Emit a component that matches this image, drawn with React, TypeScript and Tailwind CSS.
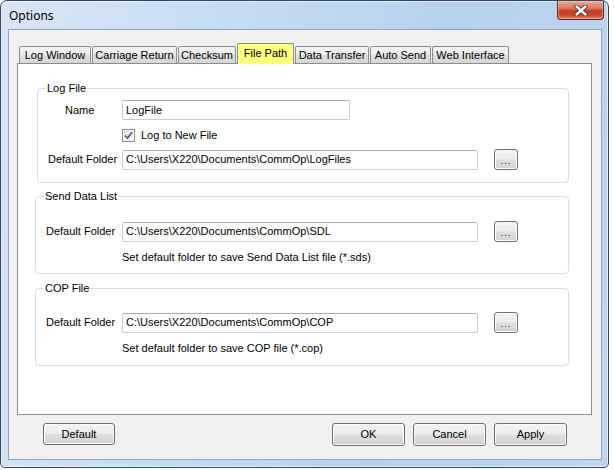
import React from 'react';

const btn =
  'flex items-center justify-center rounded-[3px] border border-[#707070] bg-[linear-gradient(180deg,#f4f4f4_0%,#ececec_48%,#dedede_52%,#d2d2d2_100%)] shadow-[inset_0_0_0_1px_#fbfbfb] text-[11px] leading-[13px] text-black';

const field =
  'flex items-center rounded-[2px] border border-[#c8ccd3] border-t-[#abadb3] bg-white pl-[3px] text-[11px] leading-[13px] text-black whitespace-nowrap overflow-hidden';

const tabs = [
  { label: 'Log Window', w: 'w-[72px]' },
  { label: 'Carriage Return', w: 'w-[85px]' },
  { label: 'Checksum', w: 'w-[58px]' },
  { label: 'File Path', w: 'w-[57px]', active: true },
  { label: 'Data Transfer', w: 'w-[74px]' },
  { label: 'Auto Send', w: 'w-[61px]' },
  { label: 'Web Interface', w: 'w-[77px]' },
];

function Browse() {
  return (
    <button className={`${btn} ml-[16px] h-[21px] w-[24px] items-end pb-[3px]`}>
      <span className="text-[9px] leading-[9px] tracking-[1px]">...</span>
    </button>
  );
}

function FolderRow({ labelPad, path }: { labelPad: string; path: string }) {
  return (
    <div className="flex h-[21px] items-center">
      <div className={`w-[86px] ${labelPad}`}>Default Folder</div>
      <div className={`${field} h-[20px] w-[356px]`}>{path}</div>
      <Browse />
    </div>
  );
}

function Group({ title, className, children }: { title: string; className: string; children: React.ReactNode }) {
  return (
    <div className={`relative rounded-[4px] border border-[#d5dfe5] ${className}`}>
      <span className="absolute left-[8px] top-[-7px] bg-white px-[1px] leading-[13px]">{title}</span>
      {children}
    </div>
  );
}

function CloseButton() {
  return (
    <div className="mr-[4px] flex h-[19px] w-[47px] items-center justify-center rounded-b-[4px] border border-t-0 border-[#5b2a20] bg-[linear-gradient(180deg,#e9aa9c_0%,#d9765f_40%,#c43b22_55%,#c84a2d_80%,#e0896a_100%)] shadow-[inset_0_0_0_1px_rgba(255,220,210,0.45)]">
      <svg width="14" height="11" viewBox="0 0 14 11">
        <path d="M2.5 1.5 L11.5 9.5 M11.5 1.5 L2.5 9.5" stroke="#4a2a24" strokeWidth="4.2" strokeLinecap="round" />
        <path d="M2.5 1.5 L11.5 9.5 M11.5 1.5 L2.5 9.5" stroke="#ffffff" strokeWidth="2.4" strokeLinecap="round" />
      </svg>
    </div>
  );
}

export default function App() {
  return (
    <div className="h-[470px] w-[614px] bg-white font-['Liberation_Sans',Arial,sans-serif] text-[11px] leading-[13px] text-black">
      <div className="flex h-[468px] w-[609px] flex-col rounded-t-[7px] rounded-b-[5px] border border-[#34475e] bg-[linear-gradient(100deg,#d7e6f7_0%,#c6dbf2_35%,#b7d0ec_65%,#bed5ef_100%)] shadow-[inset_0_0_0_1px_rgba(255,255,255,0.55)]">
        {/* title bar */}
        <div className="flex h-[28px] items-start justify-between">
          <span className="ml-[8px] mt-[7px] font-['Noto_Sans',sans-serif] text-[12px] leading-[16px] text-black">Options</span>
          <CloseButton />
        </div>

        {/* client area */}
        <div className="mx-[7px] flex h-[431px] w-[594px] flex-col border border-[#8fa6c0] bg-[#f0f0f0] pt-[13px]">
          <div className="relative z-10 ml-[10px] flex h-[20px] items-end gap-px">
            {tabs.map((t) =>
              t.active ? (
                <div
                  key={t.label}
                  className={`${t.w} -mb-px flex h-[21px] items-start justify-center rounded-t-[2px] border border-b-0 border-[#898c95] bg-[#ffff80] pt-[3px]`}
                >
                  {t.label}
                </div>
              ) : (
                <div
                  key={t.label}
                  className={`${t.w} flex h-[17px] items-center justify-center rounded-t-[2px] border border-b-0 border-[#898c95] bg-[linear-gradient(180deg,#f3f3f3_0%,#ebebeb_50%,#dedede_52%,#d6d6d6_100%)]`}
                >
                  {t.label}
                </div>
              )
            )}
          </div>

          {/* tab page */}
          <div className="ml-[8px] flex h-[352px] w-[575px] flex-col border border-[#898c95] bg-white">
            <Group title="Log File" className="ml-[19px] mt-[24px] h-[95px] w-[532px]">
              <div className="flex flex-col pt-[11px]">
                <div className="flex h-[20px] items-center">
                  <div className="w-[84px] pl-[27px]">Name</div>
                  <div className={`${field} h-[20px] w-[228px]`}>LogFile</div>
                </div>
                <div className="mt-[9px] flex h-[13px] items-center pl-[84px]">
                  <span className="flex h-[13px] w-[13px] items-center justify-center border border-[#8e8f8f] bg-[linear-gradient(135deg,#dcdcdc_0%,#ffffff_100%)] shadow-[inset_0_0_0_1px_#f4f4f4]">
                    <svg width="9" height="9" viewBox="0 0 9 9">
                      <path d="M1 4.5 L3.5 7.2 L8 1.3" fill="none" stroke="#4c5f8a" strokeWidth="1.8" />
                    </svg>
                  </span>
                  <span className="ml-[6px]">Log to New File</span>
                </div>
                <div className="mt-[7px]">
                  <div className="flex h-[21px] items-center">
                    <div className="w-[84px] pl-[10px]">Default Folder</div>
                    <div className={`${field} h-[20px] w-[356px]`}>C:\Users\X220\Documents\CommOp\LogFiles</div>
                    <Browse />
                  </div>
                </div>
              </div>
            </Group>

            <Group title="Send Data List" className="ml-[17px] mt-[13px] h-[78px] w-[534px]">
              <div className="flex flex-col pt-[24px]">
                <FolderRow labelPad="pl-[10px]" path="C:\Users\X220\Documents\CommOp\SDL" />
                <div className="mt-[9px] pl-[86px]">Set default folder to save Send Data List file (*.sds)</div>
              </div>
            </Group>

            <Group title="COP File" className="ml-[17px] mt-[14px] h-[78px] w-[534px]">
              <div className="flex flex-col pt-[23px]">
                <FolderRow labelPad="pl-[10px]" path="C:\Users\X220\Documents\CommOp\COP" />
                <div className="mt-[9px] pl-[86px]">Set default folder to save COP file (*.cop)</div>
              </div>
            </Group>
          </div>

          {/* dialog buttons */}
          <div className="mt-[8px] flex items-start justify-between px-[34px]">
            <button className={`${btn} h-[22px] w-[72px]`}>Default</button>
            <div className="flex gap-[8px]">
              <button className={`${btn} h-[23px] w-[73px]`}>OK</button>
              <button className={`${btn} h-[23px] w-[73px]`}>Cancel</button>
              <button className={`${btn} h-[23px] w-[73px]`}>Apply</button>
            </div>
          </div>
        </div>
      </div>
    </div>
  );
}
